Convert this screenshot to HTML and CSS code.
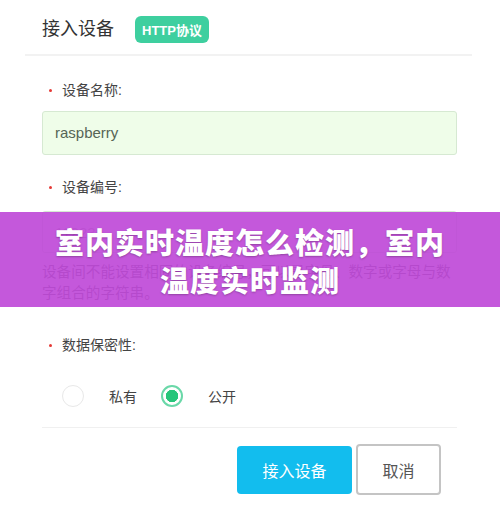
FILE: index.html
```html
<!DOCTYPE html>
<html lang="zh-CN">
<head>
  <meta charset="UTF-8">
  <meta name="viewport" content="width=device-width, initial-scale=1.0">
  <title>室内实时温度怎么检测</title>
  <link rel="stylesheet" href="styles.css">
</head>
<body>
  <div class="card">
    <div class="header">
      <span class="title">接入设备</span>
      <span class="badge">HTTP协议</span>
    </div>

    <div class="form">
      <div class="label label-first">设备名称:</div>
      <div class="input input-filled">raspberry</div>

      <div class="label label-second">设备编号:</div>
      <div class="input input-plain">11223</div>
      <p class="help">设备间不能设置相同的设备编号，可以是字母、数字或字母与数字组合的字符串。</p>

      <div class="label label-third">数据保密性:</div>
      <div class="radios">
        <span class="radio"></span>
        <span class="radio-text">私有</span>
        <span class="radio checked"></span>
        <span class="radio-text">公开</span>
      </div>

      <div class="actions">
        <button class="btn btn-primary">接入设备</button>
        <button class="btn btn-cancel">取消</button>
      </div>
    </div>

    <!-- 标题横幅 -->
    <div class="banner">
      <h1>室内实时温度怎么检测，室内<br>温度实时监测</h1>
    </div>
  </div>
</body>
</html>
```

FILE: styles.css
```css
body {
  margin: 0;
  background: #fff;
  font-family: "Liberation Sans", "Noto Sans CJK SC", sans-serif;
  color: #444;
}
.card {
  position: relative;
  width: 500px;
  height: 520px;
  overflow: hidden;
}
.header {
  display: flex;
  align-items: center;
  gap: 21px;
  margin: 0 28px 0 25px;
  padding: 16px 17px 11px;
  border-bottom: 2px solid #f2f2f2;
}
.title {
  font-size: 18px;
  line-height: 27px;
  color: #333;
}
.badge {
  display: inline-flex;
  align-items: center;
  justify-content: center;
  width: 74px;
  height: 27px;
  background-color: #3ecf9f;
  border-radius: 6px;
  color: #fff;
  font-size: 13px;
  font-weight: bold;
}
.form {
  padding: 0 43px 0 42px;
}
.label {
  position: relative;
  padding-left: 20px;
  font-size: 14px;
  line-height: 20px;
  color: #444;
}
.label::before {
  content: "";
  position: absolute;
  left: 7px;
  top: 9px;
  width: 3px;
  height: 3px;
  border-radius: 50%;
  background: #e53935;
}
.label-first {
  margin: 24px 0 11px;
}
.label-second {
  margin: 22px 0 14px;
}
.label-third {
  margin: 31px 0 29px;
}
.input {
  box-sizing: border-box;
  height: 44px;
  padding: 0 12px;
  border: 1px solid #d6e9d2;
  border-radius: 3px;
  font-size: 15px;
  line-height: 42px;
}
.input-filled {
  background-color: #effde9;
  color: #566556;
}
.input-plain {
  height: 42px;
  background-color: #fff;
  color: #aaa;
}
.help {
  margin: 9px 0 0;
  font-size: 14.6px;
  line-height: 21px;
  color: #666;
}
.radios {
  display: flex;
  align-items: center;
  gap: 24px;
  height: 24px;
  padding-left: 20px;
  padding-bottom: 19px;
  border-bottom: 1px solid #f0f0f0;
}
.radio {
  box-sizing: border-box;
  width: 22px;
  height: 22px;
  border: 1.5px solid #e8e8e8;
  border-radius: 50%;
  margin-right: 1px;
}
.radio.checked {
  border: 2px solid #6ad8a8;
  background: radial-gradient(circle, #27c57a 0 6px, #fff 6.5px);
}
.radio-text {
  font-size: 14px;
  color: #444;
}
.actions {
  display: flex;
  justify-content: flex-end;
  align-items: center;
  gap: 4px;
  padding: 16px 16px 0 0;
}
.btn {
  box-sizing: border-box;
  border-radius: 4px;
  font-family: inherit;
  font-size: 16px;
  cursor: pointer;
}
.btn-primary {
  width: 115px;
  height: 48px;
  border: none;
  background-color: #12bdee;
  color: #fff;
}
.btn-cancel {
  width: 85px;
  height: 51px;
  border: 2px solid #c4c4c4;
  background-color: #fff;
  color: #555;
}

/* 横幅 */
.banner {
  position: absolute;
  left: 0;
  top: 212px;
  width: 100%;
  height: 95px;
  display: flex;
  align-items: center;
  justify-content: center;
  background-color: rgba(190, 70, 215, 0.9);
}
.banner h1 {
  margin: 0;
  text-align: center;
  font-family: "Noto Sans CJK SC", sans-serif;
  font-size: 29px;
  font-weight: 900;
  line-height: 38px;
  color: #fff;
  letter-spacing: 1px;
  text-shadow: 0 1px 2px rgba(0, 0, 0, 0.25);
}
```
